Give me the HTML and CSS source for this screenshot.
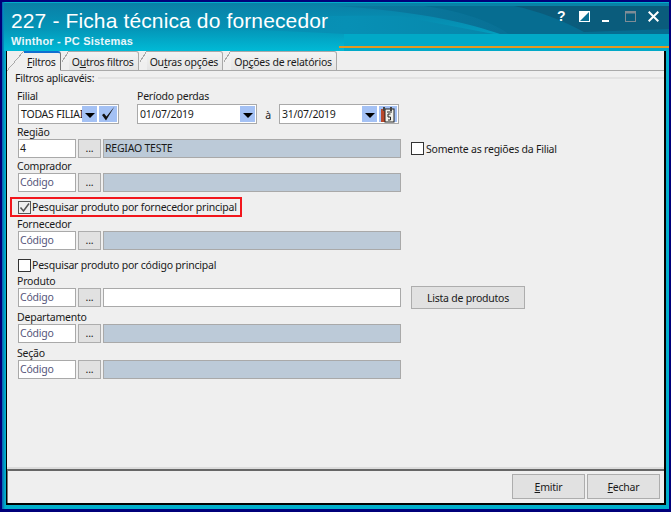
FILE: index.html
```html
<!DOCTYPE html>
<html lang="pt-BR">
<head>
<meta charset="utf-8">
<title>227 - Ficha técnica do fornecedor</title>
<link rel="stylesheet" href="styles.css">
</head>
<body>
<div class="window">
  <header class="titlebar">
    <svg class="swoosh" viewBox="0 0 665 48" width="665" height="48" preserveAspectRatio="none" aria-hidden="true">
      <defs>
        <linearGradient id="base" x1="0" y1="0" x2="0" y2="1"><stop offset="0" stop-color="#0a7fa6"/><stop offset=".55" stop-color="#0496b8"/><stop offset="1" stop-color="#00bad6"/></linearGradient>
        <linearGradient id="band" x1="0" y1="0" x2="1" y2="0"><stop offset="0" stop-color="#0a86ab" stop-opacity="0"/><stop offset=".6" stop-color="#0790b5"/><stop offset="1" stop-color="#0787ab"/></linearGradient>
        <linearGradient id="dark" x1="0" y1="0" x2="1" y2="0"><stop offset="0" stop-color="#0a7aa0"/><stop offset="1" stop-color="#07688c"/></linearGradient>
      </defs>
      <path d="M0 0H665V48H0Z" fill="url(#base)"/>
      <path d="M340 31H665V48H340Z" fill="#01a9c7"/>
      <path d="M120 22C240 14 330 12 395 13L490 31H340C260 27 190 24 120 22Z" fill="url(#band)"/>
      <path d="M330 3H665V31H496C470 22 420 8 330 3Z" fill="url(#dark)"/>
      <path d="M420 3H665V31H505C490 20 460 8 420 3Z" fill="#066d91"/>
      <path d="M510 3H665V26L580 29C560 18 535 8 510 3Z" fill="#0a5c7c"/>
    </svg>
    <div class="title-text">
      <h1>227 - Ficha técnica do fornecedor</h1>
      <p>Winthor - PC Sistemas</p>
    </div>
    <div class="controls" aria-hidden="true">
      <span class="ctl-help">?</span>
      <svg class="ctl" width="11" height="11" viewBox="0 0 11 11"><rect width="11" height="11" fill="#fff"/><path d="M10 1V10H1Z" fill="#0a6f93"/></svg>
      <svg class="ctl ctl-min" width="7" height="11" viewBox="0 0 7 11"><rect y="9" width="7" height="2" fill="#fff"/></svg>
      <svg class="ctl ctl-max" width="11" height="11" viewBox="0 0 11 11"><rect x=".5" y=".5" width="10" height="10" fill="none" stroke="#7f8c96"/><rect width="11" height="2.500" fill="#7f8c96"/></svg>
      <svg class="ctl" width="11" height="11" viewBox="0 0 11 11"><path d="M.7.7 10.300 10.300M10.300.7 .7 10.300" stroke="#fff" stroke-width="2"/></svg>
    </div>
    <div class="accent"></div>
  </header>

  <main class="panel">
    <nav class="tabs">
      <span class="tab active"><u>F</u>iltros</span>
      <span class="tab">O<u>u</u>tros filtros</span>
      <span class="tab">Ou<u>t</u>ras opções</span>
      <span class="tab">Op<u>ç</u>ões de relatórios</span>
    </nav>

    <section class="content">
      <div class="legend"><span>Filtros aplicavéis:</span></div>

      <div class="top-row">
        <div class="field">
          <label>Filial</label>
          <div class="box combo filial">
            <span class="value clip">TODAS FILIAIS</span>
            <span class="drop"><i></i></span>
            <span class="drop check">
              <svg width="18" height="18" viewBox="0 0 18 18"><path d="M3 10 7 15.500 15.500 1.500 7.500 11.500 5 8.500Z" fill="#111"/></svg>
            </span>
          </div>
        </div>
        <div class="field period">
          <label>Período perdas</label>
          <div class="period-row">
            <div class="box combo date"><span class="value">01/07/2019</span><span class="drop"><i></i></span></div>
            <span class="to">à</span>
            <div class="box combo date date2"><span class="value">31/07/2019</span><span class="drop"><i></i></span>
              <span class="drop cal">
                <svg width="16" height="17" viewBox="0 0 16 17"><rect x="1" y="3" width="4" height="13" fill="#b8492b"/><rect x="5" y="3" width="9" height="13" fill="#f1f1ea" stroke="#222"/><rect x="3" y="1" width="2" height="4" fill="#444"/><rect x="10" y="1" width="2" height="4" fill="#444"/><path d="M7 6H12M10.500 8H8V11H10.500V14H8" fill="none" stroke="#222"/></svg>
              </span>
            </div>
          </div>
        </div>
      </div>

      <div class="field lookup-field">
        <label>Região</label>
        <div class="lookup">
          <span class="box code filled">4</span><span class="dots">...</span><span class="box desc">REGIAO TESTE</span>
          <span class="checkline side"><span class="cb"></span>Somente as regiões da Filial</span>
        </div>
      </div>

      <div class="field lookup-field">
        <label>Comprador</label>
        <div class="lookup">
          <span class="box code">Código</span><span class="dots">...</span><span class="box desc"></span>
        </div>
      </div>

      <div class="highlight">
        <span class="checkline"><span class="cb on"><svg width="13" height="13" viewBox="0 0 13 13"><path d="M2.500 6.500 5.500 10 11 2.500" fill="none" stroke="#555" stroke-width="1.500"/></svg></span>Pesquisar produto por fornecedor principal</span>
      </div>

      <div class="field after-highlight">
        <label>Fornecedor</label>
        <div class="lookup">
          <span class="box code">Código</span><span class="dots">...</span><span class="box desc"></span>
        </div>
      </div>

      <div class="plain-check">
        <span class="checkline"><span class="cb"></span>Pesquisar produto por código principal</span>
      </div>

      <div class="field tight">
        <label>Produto</label>
        <div class="lookup">
          <span class="box code">Código</span><span class="dots">...</span><span class="box desc white"></span>
          <span class="btn list">Lista de produtos</span>
        </div>
      </div>

      <div class="field wide">
        <label>Departamento</label>
        <div class="lookup">
          <span class="box code">Código</span><span class="dots">...</span><span class="box desc"></span>
        </div>
      </div>

      <div class="field wide">
        <label>Seção</label>
        <div class="lookup">
          <span class="box code">Código</span><span class="dots">...</span><span class="box desc"></span>
        </div>
      </div>
    </section>

    <footer class="footer">
      <span class="btn action"><u>E</u>mitir</span>
      <span class="btn action"><u>F</u>echar</span>
    </footer>
  </main>
</div>
</body>
</html>
```
FILE: styles.css
```css
* { box-sizing: border-box; }
html, body { margin: 0; padding: 0; }
body {
  width: 671px;
  height: 512px;
  overflow: hidden;
  background: #000080;
  font-family: "Noto Sans", "Open Sans", sans-serif;
  font-size: 10.5px;
  letter-spacing: -.22px;
  color: #1a1a1a;
}
.window {
  width: 671px;
  height: 512px;
  border: solid #00007a;
  border-width: 2px 2px 3px 2px;
  background: linear-gradient(90deg, #0a5fb0 0, #00aecb 3px, #00aecb 100%);
  display: flex;
  flex-direction: column;
}
.titlebar {
  position: relative;
  height: 48px;
  flex: none;
  display: flex;
  justify-content: space-between;
}
.swoosh { position: absolute; left: 2px; top: 1px; }
.title-text { position: relative; padding: 7px 0 0 9px; color: #fff; }
.title-text h1 {
  margin: 0;
  font: 400 21px/24px "Liberation Sans", Arial, sans-serif;
  letter-spacing: .13px;
}
.title-text p {
  margin: 2px 0 0;
  font: 700 11px/13px "Liberation Sans", Arial, sans-serif;
  letter-spacing: .2px;
  color: #e8f6fa;
}
.controls {
  position: relative;
  display: flex;
  align-items: flex-start;
  height: 11px;
  margin: 9px 10px 0 0;
}
.ctl { display: block; margin-left: 12px; }
.ctl-max { margin-left: 16px; }
.ctl-help {
  font: 700 14px/11px "Liberation Sans", Arial, sans-serif;
  letter-spacing: 0;
  color: #fff;
  width: 8px;
  margin-right: 2px;
}
.accent {
  position: absolute;
  left: 337px;
  right: 0;
  bottom: 2px;
  height: 2px;
  background: #e2981f;
}

.panel {
  flex: none;
  width: 660px;
  height: 455px;
  margin-left: 4px;
  border: solid #000;
  border-width: 1px 2px 2px 1px;
  background: #efefef;
  display: flex;
  flex-direction: column;
}
.tabs {
  height: 20px;
  flex: none;
  display: flex;
  padding-left: 17px;
  border-bottom: 1px solid #a9a9a9;
}
.tab {
  position: relative;
  height: 20px;
  padding: 2px 4px 0 3px;
  margin-left: 8px;
  line-height: 16px;
  background: linear-gradient(#f3f3f3, #e4e4e4);
  border: solid #a9a9a9;
  border-width: 1px 1px 1px 0;
  border-radius: 0 3px 0 0;
}
.tab::before {
  content: "";
  position: absolute;
  left: -7px;
  top: -1px;
  width: 7px;
  height: 11px;
  background: linear-gradient(to top left, #f1f1f1 47%, #a9a9a9 47%, #a9a9a9 56%, transparent 56%);
}
.tab.active {
  background: #efefef;
  border-bottom-color: #efefef;
  border-top: 2px solid #0f6fd1;
  border-right-color: #777;
  padding: 1px 4px 0 3px;
  margin-left: 0;
  z-index: 1;
}
.tab.active::before {
  left: -17px;
  top: -2px;
  width: 17px;
  height: 20px;
  background: linear-gradient(to top left, #efefef 49%, #a9a9a9 49%, #a9a9a9 52%, #efefef 52%);
}

.content {
  flex: 1;
  padding: 0 0 0 11px;
}
.legend {
  display: flex;
  align-items: center;
  height: 14px;
  margin-left: -3px;
}
.legend span { padding-right: 4px; }
.legend::after { content: ""; flex: 1; border-top: 2px solid #e2e2e2; }
.top-row { display: flex; gap: 18px; margin-top: 4px; }
label { display: block; height: 14px; line-height: 14px; margin-left: -1px; }
.period label { margin-left: 0; }
.box {
  display: block;
  border: 1px solid #a9a9a9;
  background: #fff;
  height: 19px;
  line-height: 16px;
  padding-left: 1px;
}
.combo { display: flex; align-items: stretch; height: 20px; margin-top: 1px; padding: 1px; }
.value { flex: 1; min-width: 0; padding-left: 1px; line-height: 16px; white-space: nowrap; }
.clip { overflow: hidden; }
.filial { width: 101px; }
.drop {
  flex: none;
  width: 15px;
  background: #a4c1f4;
  display: flex;
  align-items: center;
  justify-content: center;
}
.drop i { border: solid transparent; border-width: 5px 5px 0; border-top-color: #000; margin-top: 2px; }
.check { width: 18px; margin-left: 2px; }
.cal { width: 18px; margin-left: 2px; }
.period-row { display: flex; align-items: center; }
.date { width: 120px; }
.to { width: 22px; text-align: center; padding-top: 3px; }
.lookup-field { margin-top: 1px; }
.lookup { display: flex; align-items: center; height: 19px; }
.code { width: 58px; color: #55557a; }
.code.filled { color: #1a1a1a; }
.dots {
  width: 23px;
  height: 19px;
  margin: 0 2px;
  background: #e1e1e1;
  border: 1px solid #adadad;
  text-align: center;
  line-height: 17px;
}
.desc { width: 298px; background: #bccad8; }
.desc.white { background: #fff; }
.checkline { display: inline-flex; align-items: center; gap: 1px; white-space: nowrap; line-height: 14px; }
.cb {
  width: 13px;
  height: 13px;
  border: 1px solid #333;
  background: #fff;
  display: inline-block;
  flex: none;
}
.cb.on { background: transparent; border-color: #555; }
.cb svg { display: block; margin: -1px; }
.side { margin-left: 10px; gap: 2px; }
.highlight {
  width: 232px;
  height: 20px;
  margin: 5px 0 0 -8px;
  padding-left: 6px;
  border: 2px solid #f2161c;
  display: flex;
  align-items: center;
}
.after-highlight { margin-top: 0; }
.plain-check { height: 14px; margin-top: 8px; display: flex; }
.tight { margin-top: 2px; }
.wide { margin-top: 3px; }
.btn {
  display: flex;
  align-items: center;
  justify-content: center;
  background: #e1e1e1;
  border: 1px solid #adadad;
}
.list { width: 114px; height: 23px; margin-left: 10px; }
.footer {
  flex: none;
  height: 34px;
  border-top: 2px solid #666;
  border-left: 1px solid #777;
  box-shadow: 0 -2px 0 #dcdcdc;
  display: flex;
  justify-content: flex-end;
  gap: 2px;
  padding: 3px 4px 0 0;
}
.action { width: 73px; height: 25px; }
```
